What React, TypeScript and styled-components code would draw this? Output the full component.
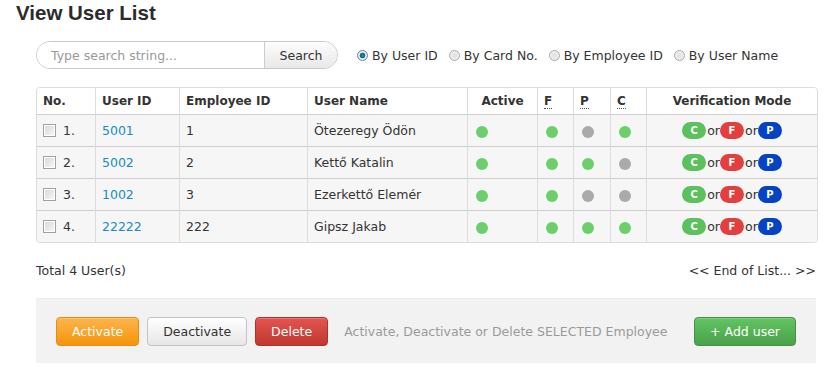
import styled, { createGlobalStyle } from 'styled-components';

const GlobalStyle = createGlobalStyle`
  body {
    margin: 0;
    background: #fff;
    font-family: "DejaVu Sans", Verdana, sans-serif;
    font-size: 12.5px;
    color: #333;
  }
`;

type User = {
	no: number;
	userId: string;
	employeeId: string;
	name: string;
	active: boolean;
	f: boolean;
	p: boolean;
	c: boolean;
};

const users: User[] = [
	{ no: 1, userId: '5001', employeeId: '1', name: 'Ötezeregy Ödön', active: true, f: true, p: false, c: true },
	{ no: 2, userId: '5002', employeeId: '2', name: 'Kettő Katalin', active: true, f: true, p: true, c: false },
	{ no: 3, userId: '1002', employeeId: '3', name: 'Ezerkettő Elemér', active: true, f: true, p: false, c: false },
	{ no: 4, userId: '22222', employeeId: '222', name: 'Gipsz Jakab', active: true, f: true, p: true, c: true },
];

const radios = ['By User ID', 'By Card No.', 'By Employee ID', 'By User Name'];

function App() {
	return (
		<Page>
			<GlobalStyle />
			<Title>View User List</Title>
			<Content>
				<SearchRow>
					<SearchBox>
						<SearchInput placeholder='Type search string...' />
						<SearchButton>Search</SearchButton>
					</SearchBox>
					<RadioGroup>
						{radios.map((r, i) => (
							<RadioOption key={r}>
								<RadioDot $checked={i === 0} />
								{r}
							</RadioOption>
						))}
					</RadioGroup>
				</SearchRow>

				<UserTable>
					<colgroup>
						<col style={{ width: 58 }} />
						<col style={{ width: 84 }} />
						<col style={{ width: 128 }} />
						<col style={{ width: 160 }} />
						<col style={{ width: 70 }} />
						<col style={{ width: 36 }} />
						<col style={{ width: 37 }} />
						<col style={{ width: 36 }} />
						<col style={{ width: 171 }} />
					</colgroup>
					<thead>
						<tr>
							<Th>No.</Th>
							<Th>User ID</Th>
							<Th>Employee ID</Th>
							<Th>User Name</Th>
							<Th $center>Active</Th>
							<Th><Abbr>F</Abbr></Th>
							<Th><Abbr>P</Abbr></Th>
							<Th><Abbr>C</Abbr></Th>
							<Th $center>Verification Mode</Th>
						</tr>
					</thead>
					<tbody>
						{users.map((u) => (
							<tr key={u.no}>
								<Td>
									<NoCell>
										<CheckBox />
										{u.no}.
									</NoCell>
								</Td>
								<Td><UserLink>{u.userId}</UserLink></Td>
								<Td>{u.employeeId}</Td>
								<Td>{u.name}</Td>
								<Td><Dot $on={u.active} /></Td>
								<Td><Dot $on={u.f} /></Td>
								<Td><Dot $on={u.p} /></Td>
								<Td><Dot $on={u.c} /></Td>
								<Td $center>
									<Modes>
										<ModePill $color='#5cc15c'>C</ModePill>
										<Or>or</Or>
										<ModePill $color='#e2403f'>F</ModePill>
										<Or>or</Or>
										<ModePill $color='#0643c2'>P</ModePill>
									</Modes>
								</Td>
							</tr>
						))}
					</tbody>
				</UserTable>

				<SummaryRow>
					<span>Total 4 User(s)</span>
					<span>&lt;&lt; End of List... &gt;&gt;</span>
				</SummaryRow>

				<ActionPanel>
					<ActionLeft>
						<ActionButton $variant='warning'>Activate</ActionButton>
						<ActionButton $variant='default'>Deactivate</ActionButton>
						<ActionButton $variant='danger'>Delete</ActionButton>
						<HelpText>Activate, Deactivate or Delete SELECTED Employee</HelpText>
					</ActionLeft>
					<ActionButton $variant='success'>+ Add user</ActionButton>
				</ActionPanel>
			</Content>
		</Page>
	);
}

const Page = styled.div`
	padding: 0 18px 0 16px;
`;

const Title = styled.h1`
	margin: 0;
	font-family: "Liberation Sans", Arial, sans-serif;
	font-size: 20.5px;
	line-height: 26px;
	font-weight: bold;
	color: #2b2b2b;
`;

const Content = styled.div`
	padding-left: 20px;
	width: 780px;
`;

const SearchRow = styled.div`
	display: flex;
	align-items: center;
	margin-top: 15px;
	height: 28px;
`;

const SearchBox = styled.div`
	display: flex;
	width: 302px;
	height: 28px;
	box-sizing: border-box;
	border: 1px solid #c8c8c8;
	border-radius: 14px;
	overflow: hidden;
	box-shadow: inset 0 1px 2px rgba(0, 0, 0, 0.06);
`;

const SearchInput = styled.input`
	flex: 1;
	min-width: 0;
	border: none;
	outline: none;
	padding: 0 0 0 14px;
	font-family: inherit;
	font-size: 12.5px;
	color: #555;
	background: #fff;
	&::placeholder {
		color: #999;
	}
`;

const SearchButton = styled.button`
	width: 73px;
	border: none;
	border-left: 1px solid #ccc;
	background: linear-gradient(#fdfdfd, #e8e8e8);
	font-family: inherit;
	font-size: 12.5px;
	color: #333;
	padding: 0;
`;

const RadioGroup = styled.div`
	display: flex;
	align-items: center;
	gap: 11px;
	margin-left: 19px;
`;

const RadioOption = styled.label`
	display: flex;
	align-items: center;
	gap: 4px;
	color: #333;
`;

const RadioDot = styled.span<{ $checked?: boolean }>`
	width: 11px;
	height: 11px;
	box-sizing: border-box;
	border-radius: 50%;
	border: 1px solid ${(p) => (p.$checked ? '#6b7f99' : '#a9a9a9')};
	background: ${(p) =>
		p.$checked
			? 'radial-gradient(circle, #1f8fa0 0, #0f6a7a 2.5px, #e9eef3 3.2px, #dfe5ea 100%)'
			: 'radial-gradient(circle, #e0e0e0 0, #f4f4f4 100%)'};
`;

const UserTable = styled.table`
	margin-top: 18px;
	width: 780px;
	table-layout: fixed;
	border-collapse: separate;
	border-spacing: 0;
	border: 1px solid #dcdcdc;
	border-radius: 4px;
	font-size: 12.5px;
`;

const Th = styled.th<{ $center?: boolean }>`
	height: 26px;
	padding: 0 6px;
	text-align: ${(p) => (p.$center ? 'center' : 'left')};
	font-size: 12px;
	font-weight: bold;
	color: #333;
	background: #fff;
	border-bottom: 1px solid #cfcfcf;
	& + & {
		border-left: 1px solid #dcdcdc;
	}
	&:first-child {
		border-top-left-radius: 4px;
	}
	&:last-child {
		border-top-right-radius: 4px;
	}
`;

const Td = styled.td<{ $center?: boolean }>`
	height: 31px;
	padding: 0 6px;
	text-align: ${(p) => (p.$center ? 'center' : 'left')};
	background: #f6f6f6;
	color: #333;
	white-space: nowrap;
	tr + tr > & {
		border-top: 1px solid #cfcfcf;
	}
	& + & {
		border-left: 1px solid #dcdcdc;
	}
	tr:last-child > &:first-child {
		border-bottom-left-radius: 4px;
	}
	tr:last-child > &:last-child {
		border-bottom-right-radius: 4px;
	}
`;

const Abbr = styled.span`
	border-bottom: 1px dotted #555;
`;

const NoCell = styled.span`
	display: flex;
	align-items: center;
	gap: 7px;
`;

const CheckBox = styled.span`
	width: 13px;
	height: 13px;
	box-sizing: border-box;
	border: 1px solid #a0a0a0;
	background: linear-gradient(135deg, #d8d8d8, #f6f6f6);
	box-shadow: inset 0 0 0 1px #fff;
`;

const UserLink = styled.a`
	color: #1a8bc0;
	text-decoration: none;
`;

const Dot = styled.span<{ $on: boolean }>`
	display: inline-block;
	vertical-align: middle;
	width: 12px;
	height: 12px;
	border-radius: 50%;
	margin-left: 2px;
	background: ${(p) => (p.$on ? '#6ccf6c' : '#aaaaaa')};
`;

const Modes = styled.span`
	display: inline-flex;
	align-items: center;
`;

const ModePill = styled.span<{ $color: string }>`
	display: inline-flex;
	align-items: center;
	justify-content: center;
	width: 24px;
	height: 17px;
	border-radius: 9px;
	background: ${(p) => p.$color};
	color: #fff;
	font-size: 10px;
	font-weight: bold;
`;

const Or = styled.span`
	margin: 0 0 0 1px;
	color: #333;
`;

const SummaryRow = styled.div`
	display: flex;
	justify-content: space-between;
	margin-top: 20px;
	line-height: 16px;
	color: #333;
`;

const ActionPanel = styled.div`
	display: flex;
	align-items: center;
	justify-content: space-between;
	margin-top: 19px;
	height: 65px;
	padding: 0 20px;
	background: #f2f2f2;
	border-top: 1px solid #ececec;
	box-sizing: border-box;
`;

const ActionLeft = styled.div`
	display: flex;
	align-items: center;
	gap: 8px;
`;

const variants = {
	warning: { bg: 'linear-gradient(#fbb44c, #f7950a)', border: '#e38d13', color: '#fff' },
	default: { bg: 'linear-gradient(#ffffff, #e6e6e6)', border: '#c4c4c4', color: '#333' },
	danger: { bg: 'linear-gradient(#e45450, #c0382f)', border: '#b0302a', color: '#fff' },
	success: { bg: 'linear-gradient(#62c462, #4aa14a)', border: '#449044', color: '#fff' },
};

const ActionButton = styled.button<{ $variant: keyof typeof variants }>`
	height: 29px;
	padding: 0 15px;
	border-radius: 4px;
	border: 1px solid ${(p) => variants[p.$variant].border};
	background: ${(p) => variants[p.$variant].bg};
	color: ${(p) => variants[p.$variant].color};
	font-family: inherit;
	font-size: 12.5px;
	box-shadow: inset 0 1px 0 rgba(255, 255, 255, 0.2);
`;

const HelpText = styled.span`
	margin-left: 8px;
	color: #9a9a9a;
`;

export default App;
